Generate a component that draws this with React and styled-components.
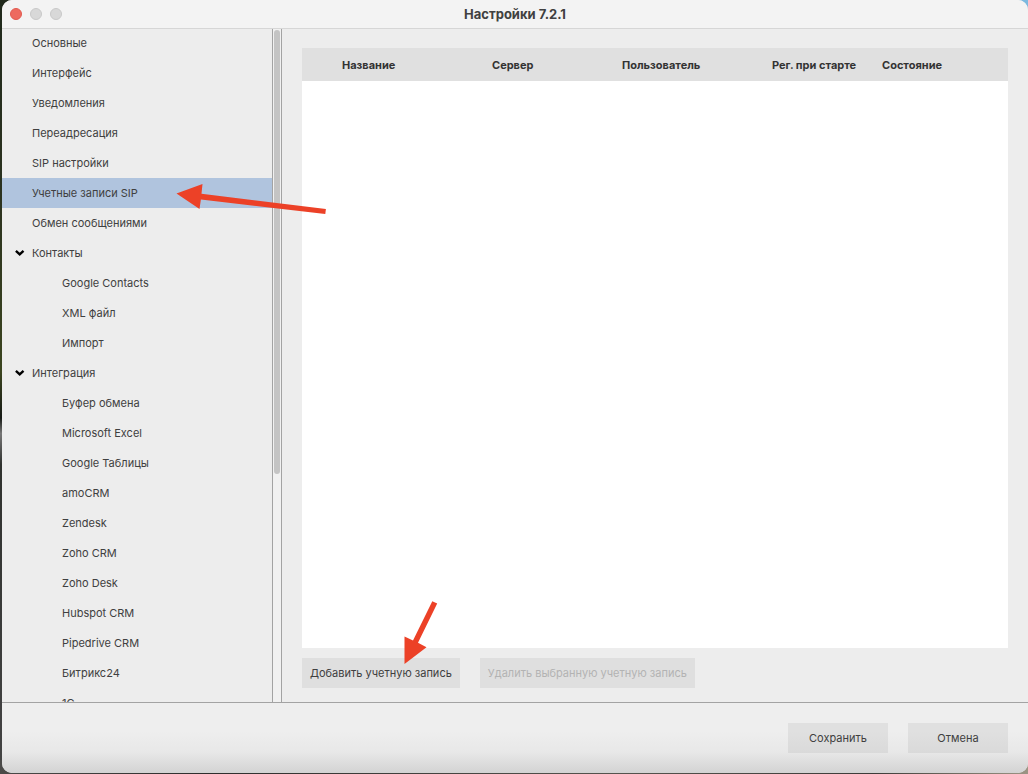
import styled, { createGlobalStyle } from "styled-components";

const menu = [
  { label: "Основные" },
  { label: "Интерфейс" },
  { label: "Уведомления" },
  { label: "Переадресация" },
  { label: "SIP настройки" },
  { label: "Учетные записи SIP", active: true },
  { label: "Обмен сообщениями" },
  { label: "Контакты", group: true },
  { label: "Google Contacts", nested: true },
  { label: "XML файл", nested: true },
  { label: "Импорт", nested: true },
  { label: "Интеграция", group: true },
  { label: "Буфер обмена", nested: true },
  { label: "Microsoft Excel", nested: true },
  { label: "Google Таблицы", nested: true },
  { label: "amoCRM", nested: true },
  { label: "Zendesk", nested: true },
  { label: "Zoho CRM", nested: true },
  { label: "Zoho Desk", nested: true },
  { label: "Hubspot CRM", nested: true },
  { label: "Pipedrive CRM", nested: true },
  { label: "Битрикс24", nested: true },
  { label: "1С", nested: true },
];

function App() {
  return (
    <Desktop>
      <GlobalStyle />
      <Window>
        <TitleBar>
          <Lights>
            <Light $close aria-label="Закрыть" />
            <Light aria-label="Свернуть" />
            <Light aria-label="Развернуть" />
          </Lights>
          <Title>Настройки 7.2.1</Title>
        </TitleBar>
        <Body>
          <Sidebar>
            {menu.map((item) => (
              <MenuItem key={item.label} $active={item.active} $nested={item.nested}>
                {item.group && <Chevron />}
                {item.label}
              </MenuItem>
            ))}
          </Sidebar>
          <ScrollTrack>
            <ScrollThumb />
          </ScrollTrack>
          <Main>
            <TableBox>
              <Table>
                <thead>
                  <tr>
                    <Th $width={190} $first>Название</Th>
                    <Th $width={130}>Сервер</Th>
                    <Th $width={150}>Пользователь</Th>
                    <Th $width={110}>Рег. при старте</Th>
                    <Th>Состояние</Th>
                  </tr>
                </thead>
              </Table>
            </TableBox>
            <Actions>
              <Button>
                Добавить учетную запись
                <AddArrow />
              </Button>
              <Button disabled>Удалить выбранную учетную запись</Button>
            </Actions>
          </Main>
          <MenuArrow />
        </Body>
        <Footer>
          <Button $fixed>Сохранить</Button>
          <Button $fixed>Отмена</Button>
        </Footer>
      </Window>
    </Desktop>
  );
}

function Chevron() {
  return (
    <ChevronSvg viewBox="0 0 10 8" aria-hidden="true">
      <path d="M0.9 1.9 L4.7 5.3 L8.5 1.9" fill="none" stroke="#000" strokeWidth="2.4" />
    </ChevronSvg>
  );
}

function MenuArrow() {
  return (
    <MenuArrowSvg viewBox="0 0 150 32" aria-hidden="true">
      <path
        d="M0.5 10.5 L26.5 1 L25.5 10.8 L149.9 26 L149.3 31 L24.9 16.5 L23.5 26 Z"
        fill="#ec4127"
      />
    </MenuArrowSvg>
  );
}

function AddArrow() {
  return (
    <AddArrowSvg viewBox="0 0 34 64" aria-hidden="true">
      <path
        d="M0.5 63 L0.5 35.5 L9 39.4 L28.3 0.2 L33.2 2.4 L14 41.8 L22.5 46.2 Z"
        fill="#ec4127"
      />
    </AddArrowSvg>
  );
}

const GlobalStyle = createGlobalStyle`
  * {
    box-sizing: border-box;
  }
  body {
    margin: 0;
    font-family: Inter, "Liberation Sans", sans-serif;
    font-size: 11px;
    color: #404040;
  }
`;

const Desktop = styled.div`
  height: 100vh;
  padding: 0 0 1px 2px;
  background:
    linear-gradient(to right, transparent 90%, #7cb9df 90%) top / 100% 40px no-repeat,
    linear-gradient(to right, #4b4a48, #2d2d2c 20%, #55544e 60%, #3c3b38 85%, #9c9484) bottom / 100% 14px no-repeat,
    linear-gradient(#20291c, #2c3320 25%, #3c4520 48%, #171b16 54%, #777 56%, #30322f 60%, #444);
`;

const Window = styled.div`
  display: flex;
  flex-direction: column;
  height: 100%;
  overflow: hidden;
  border-radius: 10px;
  background: #ededed;
`;

const TitleBar = styled.header`
  position: relative;
  z-index: 1;
  display: grid;
  grid-template-columns: 1fr auto 1fr;
  align-items: center;
  height: 28px;
  flex-shrink: 0;
  background: #f3f3f3;
  box-shadow: 0 1px 0 #d6d6d6;
`;

const Lights = styled.div`
  display: flex;
  gap: 8px;
  padding-left: 8px;
`;

const Light = styled.button`
  width: 12px;
  height: 12px;
  padding: 0;
  border: 1px solid ${(props) => (props.$close ? "#e2594e" : "#c8c8c8")};
  border-radius: 50%;
  background: ${(props) => (props.$close ? "#ed6a5f" : "#d8d8d8")};
`;

const Title = styled.h1`
  margin: 0;
  font-size: 13px;
  font-weight: 700;
  line-height: 16px;
`;

const Body = styled.div`
  position: relative;
  display: flex;
  flex: 1;
  min-height: 0;
`;

const Sidebar = styled.nav`
  width: 270px;
  flex-shrink: 0;
  overflow: hidden;
`;

const MenuItem = styled.button`
  display: flex;
  align-items: center;
  width: 100%;
  height: 30px;
  padding: 0 0 0 ${(props) => (props.$nested ? 60 : 30)}px;
  border: none;
  background: ${(props) => (props.$active ? "#b0c4de" : "transparent")};
  color: inherit;
  font: inherit;
  text-align: left;
`;

const ChevronSvg = styled.svg`
  width: 10px;
  height: 8px;
  margin: 0 7px 0 -17px;
`;

const ScrollTrack = styled.div`
  width: 10px;
  flex-shrink: 0;
  padding: 2px 1px 0;
  border: solid #a3a3a3;
  border-width: 0 1px;
  background: #f1f1f1;
`;

const ScrollThumb = styled.div`
  width: 6px;
  height: 66%;
  border-radius: 3px;
  background: #c4c4c4;
`;

const Main = styled.main`
  display: flex;
  flex-direction: column;
  flex: 1;
  min-width: 0;
  padding: 20px 20px 14px;
`;

const TableBox = styled.div`
  flex: 1;
  min-height: 0;
  background: #fff;
`;

const Table = styled.table`
  width: 100%;
  table-layout: fixed;
  border-collapse: collapse;
  background: #e0e0e0;
`;

const Th = styled.th`
  width: ${(props) => (props.$width ? `${props.$width}px` : "auto")};
  height: 33px;
  padding: 0 0 0 ${(props) => (props.$first ? 40 : 0)}px;
  color: #333;
  font-weight: 700;
  text-align: left;
  white-space: nowrap;
`;

const Actions = styled.div`
  display: flex;
  gap: 20px;
  padding-top: 10px;
`;

const Button = styled.button`
  position: relative;
  width: ${(props) => (props.$fixed ? "100px" : "auto")};
  height: 30px;
  padding: 0 8px;
  border: none;
  background: rgba(0, 0, 0, 0.06);
  color: #404040;
  font: inherit;
  white-space: nowrap;

  &:disabled {
    color: #b3b3b3;
  }
`;

const Footer = styled.footer`
  display: flex;
  justify-content: flex-end;
  gap: 20px;
  padding: 20px;
  border-top: 1px solid #a3a3a3;
  background: linear-gradient(#eee 40%, #e8e8e8 70%, #d3d3d3);
`;

const MenuArrowSvg = styled.svg`
  position: absolute;
  top: 155px;
  left: 174px;
  width: 150px;
  height: 32px;
  pointer-events: none;
`;

const AddArrowSvg = styled.svg`
  position: absolute;
  bottom: 23px;
  left: 102px;
  width: 34px;
  height: 64px;
  pointer-events: none;
`;

export default App;
